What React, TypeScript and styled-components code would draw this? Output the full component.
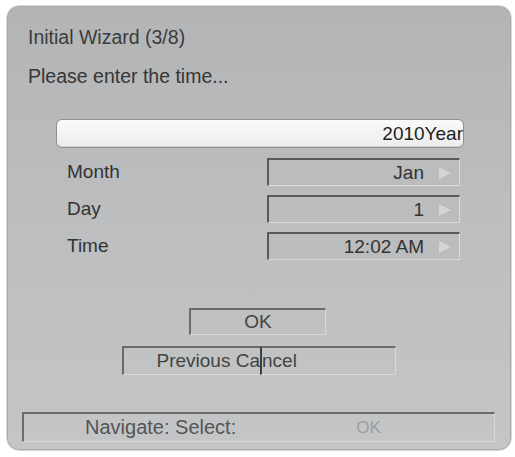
import styled, { createGlobalStyle } from 'styled-components';

const GlobalStyle = createGlobalStyle`
  html, body {
    margin: 0;
    padding: 0;
    background: #ffffff;
  }
  body {
    font-family: 'Liberation Sans', Arial, sans-serif;
  }
`;

type Field = {
  label: string;
  value: string;
};

const fields: Field[] = [
  { label: 'Month', value: 'Jan' },
  { label: 'Day', value: '1' },
  { label: 'Time', value: '12:02 AM' },
];

const App = () => {
  return (
    <>
      <GlobalStyle />
      <Page>
        <Panel>
          <Title>Initial Wizard (3/8)</Title>
          <Prompt>Please enter the time...</Prompt>
          <YearBox>2010Year</YearBox>
          <Rows>
            {fields.map((f) => (
              <Row key={f.label}>
                <Label>{f.label}</Label>
                <Selector>
                  <SelectorValue>{f.value}</SelectorValue>
                  <Arrow />
                </Selector>
              </Row>
            ))}
          </Rows>
          <OkButton>OK</OkButton>
          <ButtonPair>
            <PairHalf>Previous Ca</PairHalf>
            <PairHalf $right>ncel</PairHalf>
          </ButtonPair>
          <StatusBar>
            <StatusText>Navigate: Select:</StatusText>
            <StatusOk>OK</StatusOk>
          </StatusBar>
        </Panel>
      </Page>
    </>
  );
};

export default App;

const Page = styled.div`
  width: 515px;
  height: 457px;
  padding: 5px 3px 6px 6px;
  box-sizing: border-box;
  background: #ffffff;
`;

const Panel = styled.div`
  height: 100%;
  box-sizing: border-box;
  border-radius: 13px;
  border: 1px solid #d6d8da;
  background: linear-gradient(to bottom, #b2b4b6 0%, #bcbec0 50%, #c3c5c7 100%);
  box-shadow: inset 0 0 0 1px #a9abad;
  padding: 20px 16px 0 15px;
  display: flex;
  flex-direction: column;
  color: #363636;
`;

const Title = styled.div`
  font-size: 19.5px;
  line-height: 22px;
  margin-left: 6px;
  color: #3c3c3c;
`;

const Prompt = styled.div`
  font-size: 19.5px;
  line-height: 22px;
  margin: 17px 0 0 6px;
`;

const YearBox = styled.div`
  margin: 33px 0 0 35px;
  width: 406px;
  height: 27px;
  box-sizing: border-box;
  border-radius: 5px;
  background: linear-gradient(to bottom, #fafafa, #ececec);
  box-shadow: 0 0 0 1px #8e9092, inset 0 -1px 0 #d0d0d0;
  font-size: 19px;
  line-height: 27px;
  text-align: right;
  color: #1e1e1e;
`;

const Rows = styled.div`
  display: flex;
  flex-direction: column;
  gap: 9px;
  margin-top: 11px;
`;

const Row = styled.div`
  display: flex;
  align-items: center;
  justify-content: space-between;
  padding: 0 35px 0 45px;
`;

const Label = styled.div`
  font-size: 19px;
  color: #333;
`;

const Selector = styled.div`
  width: 193px;
  height: 28px;
  box-sizing: border-box;
  border-top: 2px solid #58595b;
  border-left: 2px solid #58595b;
  border-right: 1px solid #d8dadc;
  border-bottom: 1px solid #d8dadc;
  display: flex;
  align-items: center;
  justify-content: flex-end;
  padding-right: 8px;
  gap: 15px;
  background: #babcbe;
`;

const SelectorValue = styled.span`
  font-size: 19px;
  color: #333;
`;

const Arrow = styled.span`
  width: 0;
  height: 0;
  border-top: 6px solid transparent;
  border-bottom: 6px solid transparent;
  border-left: 12px solid #d2d4d6;
`;

const OkButton = styled.div`
  margin: 48px 0 0 167px;
  width: 137px;
  height: 27px;
  box-sizing: border-box;
  border-top: 2px solid #6a6b6d;
  border-left: 2px solid #6a6b6d;
  border-right: 1px solid #d6d8da;
  border-bottom: 1px solid #d6d8da;
  font-size: 19px;
  line-height: 24px;
  text-align: center;
  color: #444;
`;

const ButtonPair = styled.div`
  margin: 11px 0 0 100px;
  width: 274px;
  height: 29px;
  display: flex;
`;

const PairHalf = styled.div<{ $right?: boolean }>`
  flex: ${(p) => (p.$right ? '0 0 136px' : '0 0 138px')};
  box-sizing: border-box;
  border-top: 2px solid #6a6b6d;
  border-left: 2px solid ${(p) => (p.$right ? '#3e3f41' : '#6a6b6d')};
  border-right: ${(p) => (p.$right ? '1px solid #d6d8da' : 'none')};
  border-bottom: 1px solid #d6d8da;
  font-size: 19px;
  line-height: 26px;
  color: #444;
  text-align: ${(p) => (p.$right ? 'left' : 'right')};
  white-space: nowrap;
`;

const StatusBar = styled.div`
  margin: 37px 0 0 0;
  width: 473px;
  height: 30px;
  box-sizing: border-box;
  border-top: 2px solid #6a6b6d;
  border-left: 2px solid #6a6b6d;
  border-right: 1px solid #d6d8da;
  border-bottom: 1px solid #d6d8da;
  display: flex;
  align-items: center;
  font-size: 20px;
`;

const StatusText = styled.span`
  margin-left: 61px;
  color: #555;
`;

const StatusOk = styled.span`
  margin-left: 120px;
  font-size: 17px;
  color: #9c9ea0;
`;
